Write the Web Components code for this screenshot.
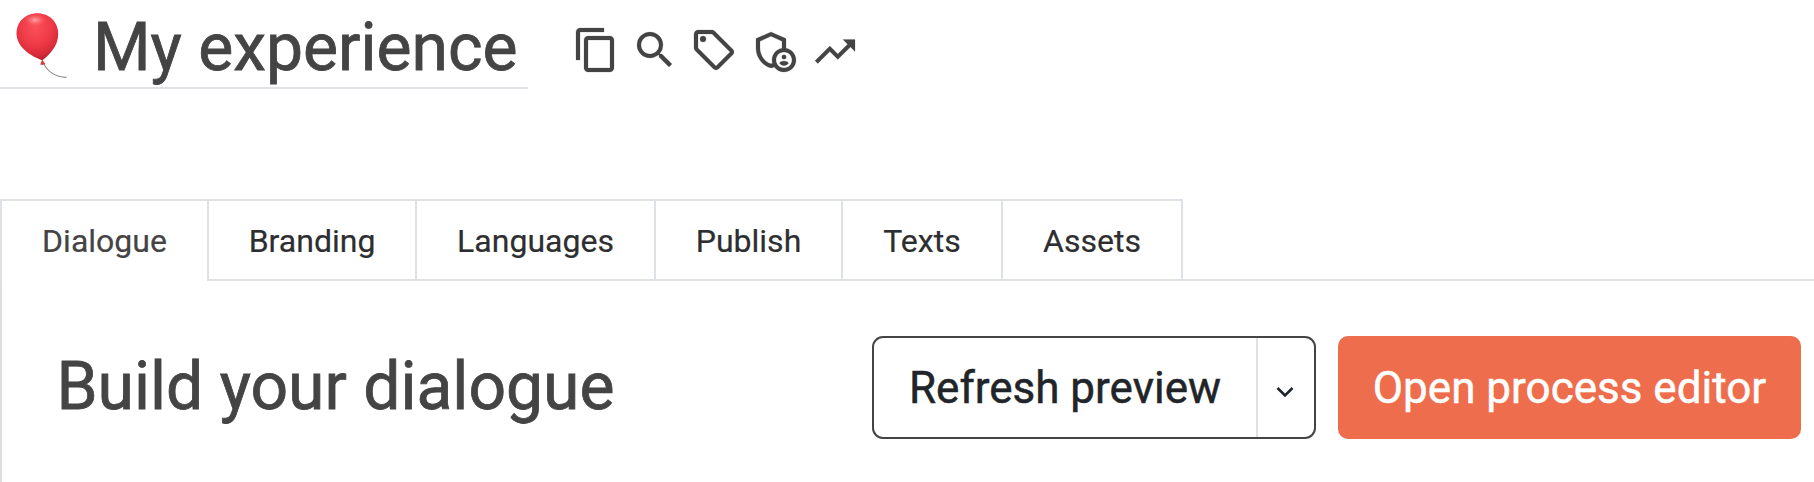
<!DOCTYPE html>
<html lang="en">
<head>
<meta charset="utf-8">
<title>My experience</title>
<style>
html, body { margin: 0; height: 100%; overflow: hidden; background: #fff; }
body { font-family: Roboto, "Liberation Sans", sans-serif; color: #444; }
</style>
</head>
<body>
<experience-page></experience-page>
<script>
function define(name, html) {
  const template = document.createElement('template');
  template.innerHTML = html;
  customElements.define(name, class extends HTMLElement {
    constructor() {
      super();
      this.attachShadow({ mode: 'open' }).append(template.content.cloneNode(true));
    }
  });
}

const ICONS = {
  copy: '<path d="M16 1H4c-1.1 0-2 .9-2 2v14h2V3h12V1zm3 4H8c-1.1 0-2 .9-2 2v14c0 1.1.9 2 2 2h11c1.1 0 2-.9 2-2V7c0-1.1-.9-2-2-2zm0 16H8V7h11v14z"/>',
  search: '<path d="M15.5 14h-.79l-.28-.27A6.471 6.471 0 0 0 16 9.5 6.5 6.5 0 1 0 9.5 16c1.61 0 3.09-.59 4.23-1.57l.27.28v.79l5 4.99L20.49 19l-4.99-5zm-6 0C7.01 14 5 11.99 5 9.5S7.01 5 9.5 5 14 7.01 14 9.5 11.99 14 9.5 14z"/>',
  tag: '<path d="M21.41 11.58l-9-9C12.05 2.22 11.55 2 11 2H4c-1.1 0-2 .9-2 2v7c0 .55.22 1.05.59 1.42l9 9c.36.36.86.58 1.41.58s1.05-.22 1.41-.59l7-7c.37-.36.59-.86.59-1.41s-.23-1.06-.59-1.42zM13 20.01L4 11V4h7v-.01l9 9-7 7.02z"/><circle cx="6.5" cy="6.5" r="1.5"/>',
  admin: '<circle cx="17" cy="15.5" r="1.12"/><path d="M17 17.5c-.73 0-2.19.36-2.24 1.08.5.71 1.32 1.17 2.24 1.17s1.74-.46 2.24-1.17c-.05-.72-1.51-1.08-2.24-1.08z"/><path fill-rule="evenodd" d="M18 11.09V6.27L10.5 3 3 6.27v4.91c0 4.54 3.2 8.79 7.5 9.82.55-.13 1.08-.32 1.6-.55C13.18 21.99 14.97 23 17 23c3.31 0 6-2.69 6-6 0-2.97-2.16-5.43-5-5.91zM11 17c0 .56.08 1.11.23 1.62-.24.11-.48.22-.73.3-3.17-1-5.5-4.24-5.5-7.74v-3.6l5.5-2.4 5.5 2.4v3.51c-2.84.48-5 2.94-5 5.91zm6 4c-2.21 0-4-1.79-4-4s1.79-4 4-4 4 1.79 4 4-1.79 4-4 4z"/>',
  trend: '<path d="M16 6.8l2.29 2.29-4.88 4.88-4-4L2 17.39l1.41 1.41 6-6 4 4 6.3-6.29L22 12.8v-6z"/>'
};

customElements.define('tool-icon', class extends HTMLElement {
  constructor() { super(); this.attachShadow({ mode: 'open' }); }
  connectedCallback() {
    this.shadowRoot.innerHTML = `<style>:host{display:block;width:48px;height:48px}svg{display:block}</style>
      <svg width="48" height="48" viewBox="0 0 24 24" fill="#444" stroke="#444" stroke-width=".1">${ICONS[this.getAttribute('name')]}</svg>`;
  }
});

define('balloon-emoji', `
<style>:host{display:block;width:93px;height:86px}svg{display:block}</style>
<svg width="80" height="86" viewBox="0 0 80 86">
  <defs>
    <radialGradient id="skin" cx=".46" cy=".3" r=".75">
      <stop offset="0" stop-color="#fb505a"/><stop offset=".5" stop-color="#ee3a47"/>
      <stop offset=".8" stop-color="#d62a37"/><stop offset="1" stop-color="#a61a25"/>
    </radialGradient>
    <radialGradient id="shine"><stop offset="0" stop-color="#ffb8b8" stop-opacity=".85"/><stop offset="1" stop-color="#ff6a70" stop-opacity="0"/></radialGradient>
  </defs>
  <path d="M43.5 63C47 71 55 77 66.500 77.300" fill="none" stroke="#8c8c88" stroke-width="1.200"/>
  <path d="M42.300 60.300C31 56.500 16.500 47 16.500 33.500C16.500 21.500 25.500 13.200 37.500 13.200S58.200 22 58.200 34C58.200 46.500 49 55 42.300 60.300Z" fill="url(#skin)"/>
  <ellipse cx="35" cy="20" rx="11" ry="6" fill="url(#shine)"/>
  <path d="M42.200 59.500L45.200 64L42.800 65L40.200 64.500Z" fill="#dc3a3b"/>
</svg>`);

define('page-header', `
<style>
:host { display: flex; height: 89px; }
.title { display: flex; box-sizing: border-box; width: 528px; height: 89px; border-bottom: 2px solid #dfe0e6; }
h1 { margin: 5px 0 0; height: 82px; font-weight: 400; font-size: 66px; line-height: 86px; white-space: nowrap; -webkit-text-stroke: .8px #444; }
.tools { display: grid; grid-template-columns: 59px 59px 59.500px 61px 48px; padding: 26px 0 0 44.300px; }
</style>
<div class="title"><balloon-emoji></balloon-emoji><h1><slot></slot></h1></div>
<div class="tools"><tool-icon name="copy"></tool-icon><tool-icon name="search"></tool-icon><tool-icon name="tag"></tool-icon><tool-icon name="admin"></tool-icon><tool-icon name="trend"></tool-icon></div>`);

define('nav-tab', `
<style>
:host { display: block; box-sizing: border-box; height: 82px; border: 2px solid #dee2e6; border-left-width: 0; text-align: center; font-size: 32px; line-height: 80px; color: #2d2e30; white-space: nowrap; -webkit-text-stroke: .2px; }
:host([active]) { color: #444; border-left-width: 2px; border-bottom-width: 0; }
</style>
<slot></slot>`);

define('tab-bar', `
<style>
:host { display: grid; grid-template-columns: 209px 208px 239px 187px 160px 180px 1fr; height: 82px; }
.rest { border-bottom: 2px solid #dee2e6; }
</style>
<slot></slot><div class="rest"></div>`);

define('split-button', `
<style>
:host { display: flex; box-sizing: border-box; width: 444px; height: 103px; border: 2px solid #444; border-radius: 11px; color: #212529; font-size: 44px; line-height: 101px; white-space: nowrap; -webkit-text-stroke: .5px; }
.label { width: 382px; height: 99px; text-align: center; border-right: 2px solid #dee2e6; }
.menu { flex: 1; display: flex; align-items: center; justify-content: center; }
svg { display: block; margin: 8px 2px 0 0; }
</style>
<div class="label"><slot></slot></div>
<div class="menu"><svg width="18" height="12" viewBox="0 0 18 12"><path d="M1.500 2l7.500 7.500 7.500-7.500" fill="none" stroke="#212529" stroke-width="2.600"/></svg></div>`);

define('primary-button', `
<style>
:host { display: block; width: 463px; height: 103px; margin-left: 22px; border-radius: 10px; background: #ee6d4c; color: #fff; text-align: center; font-size: 44px; line-height: 105px; white-space: nowrap; -webkit-text-stroke: .5px; }
</style>
<slot></slot>`);

define('dialogue-panel', `
<style>
:host { display: flex; box-sizing: border-box; height: 201px; padding: 55px 13px 0 54.500px; border-left: 2px solid #dedede; }
h2 { margin: 0; flex: 1; font-weight: 400; font-size: 66px; line-height: 102px; white-space: nowrap; -webkit-text-stroke: .8px #444; }
</style>
<h2>Build your dialogue</h2>
<split-button>Refresh preview</split-button>
<primary-button>Open process editor</primary-button>`);

define('experience-page', `
<style>
:host { display: block; height: 482px; overflow: hidden; }
tab-bar { margin-top: 110px; }
</style>
<page-header>My experience</page-header>
<tab-bar>
  <nav-tab active>Dialogue</nav-tab><nav-tab>Branding</nav-tab><nav-tab>Languages</nav-tab><nav-tab>Publish</nav-tab><nav-tab>Texts</nav-tab><nav-tab>Assets</nav-tab>
</tab-bar>
<dialogue-panel></dialogue-panel>`);
</script>
</body>
</html>
